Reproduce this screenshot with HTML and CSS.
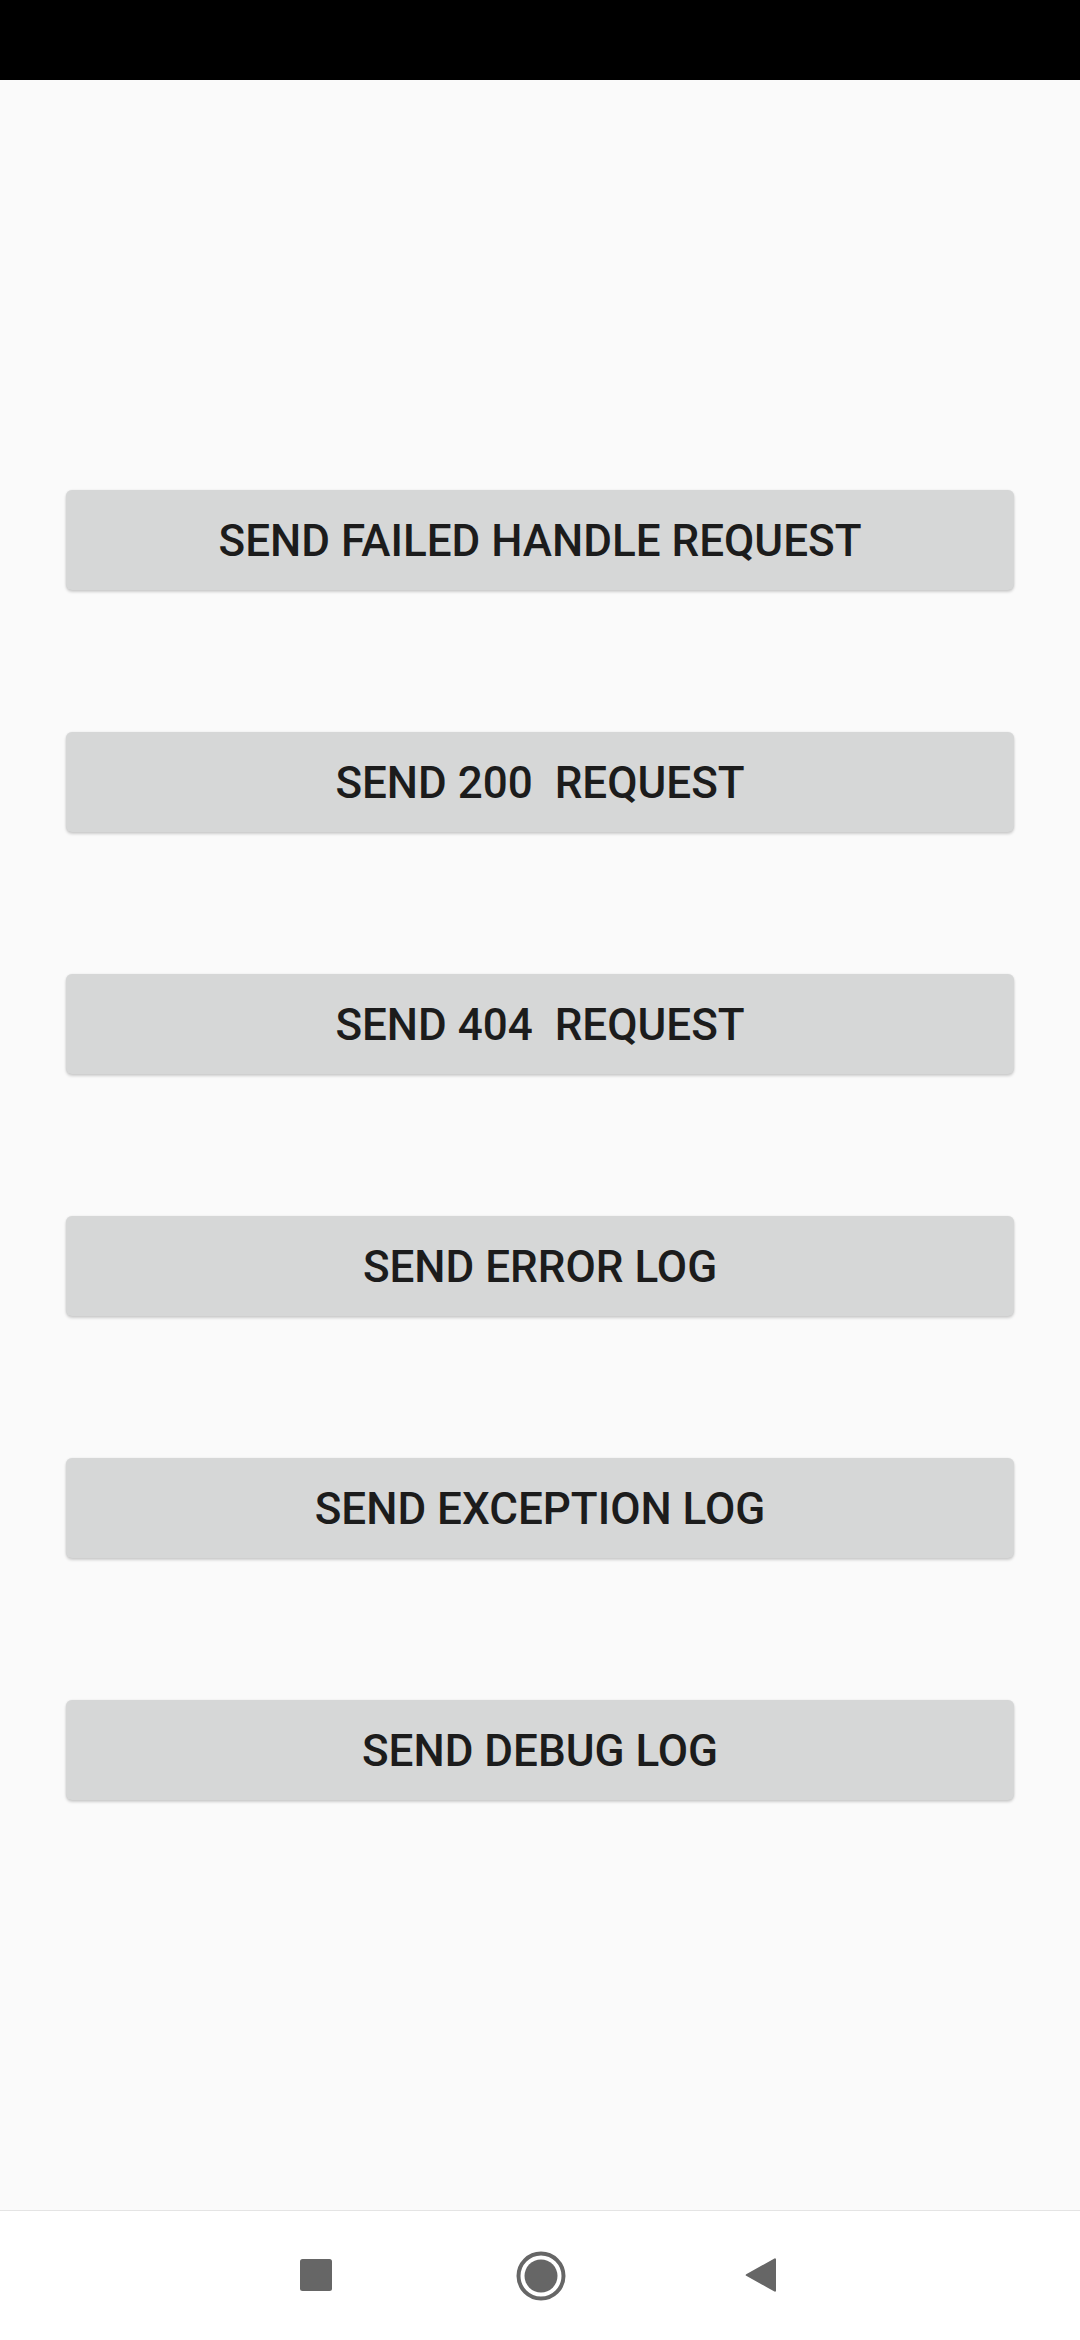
FILE: index.html
```html
<!DOCTYPE html>
<html>
<head>
<meta charset="utf-8">
<link rel="stylesheet" href="styles.css">
</head>
<body>
<div class="status-bar"></div>
<main class="content">
  <button class="btn">SEND FAILED HANDLE REQUEST</button>
  <button class="btn">SEND 200  REQUEST</button>
  <button class="btn">SEND 404  REQUEST</button>
  <button class="btn">SEND ERROR LOG</button>
  <button class="btn">SEND EXCEPTION LOG</button>
  <button class="btn">SEND DEBUG LOG</button>
</main>
<nav class="nav-bar">
  <svg class="nav-icon" width="32" height="32" viewBox="0 0 32 32"><rect x="0" y="0" width="32" height="32" rx="2.5" fill="#666666"/></svg>
  <svg class="nav-icon" width="50" height="50" viewBox="0 0 50 50"><circle cx="25" cy="25" r="22.5" fill="none" stroke="#666666" stroke-width="4"/><circle cx="25" cy="25" r="16.5" fill="#666666"/></svg>
  <svg class="nav-icon" width="32" height="36" viewBox="0 0 32 36"><path d="M30.5 1.5 L31 2 L31 34 L30.5 34.5 Q30 35 29 34.3 L1.2 18.8 Q0 18 1.2 17.2 L29 1.7 Q30 1 30.5 1.5 Z" fill="#666666"/></svg>
</nav>
</body>
</html>
```
FILE: styles.css
```css
html, body {
  margin: 0;
  padding: 0;
  width: 1080px;
  height: 2340px;
  background: #fafafa;
  overflow: hidden;
}
body {
  display: flex;
  flex-direction: column;
  font-family: Roboto, "Noto Sans", sans-serif;
}
.status-bar {
  height: 80px;
  background: #000000;
  flex: none;
}
.content {
  flex: 1;
  display: flex;
  flex-direction: column;
  gap: 142px;
  padding: 410px 66px 0;
}
.btn {
  height: 100px;
  width: 100%;
  border: none;
  border-radius: 6px;
  background: #d6d7d7;
  color: #1c1c1c;
  font-family: Roboto, "Noto Sans", sans-serif;
  font-weight: 500;
  font-size: 44px;
  letter-spacing: 0;
  white-space: pre;
  padding: 2px 0 0;
  box-shadow: 0 2px 3px rgba(0, 0, 0, 0.18), 0 0 2px rgba(0, 0, 0, 0.08);
}
.nav-bar {
  height: 129px;
  flex: none;
  background: #ffffff;
  border-top: 1px solid #e4e4e4;
  position: relative;
}
.nav-icon {
  position: absolute;
}
.nav-icon:nth-child(1) {
  left: 300px;
  top: 48px;
}
.nav-icon:nth-child(2) {
  left: 516px;
  top: 40px;
}
.nav-icon:nth-child(3) {
  left: 745px;
  top: 46px;
}
```
